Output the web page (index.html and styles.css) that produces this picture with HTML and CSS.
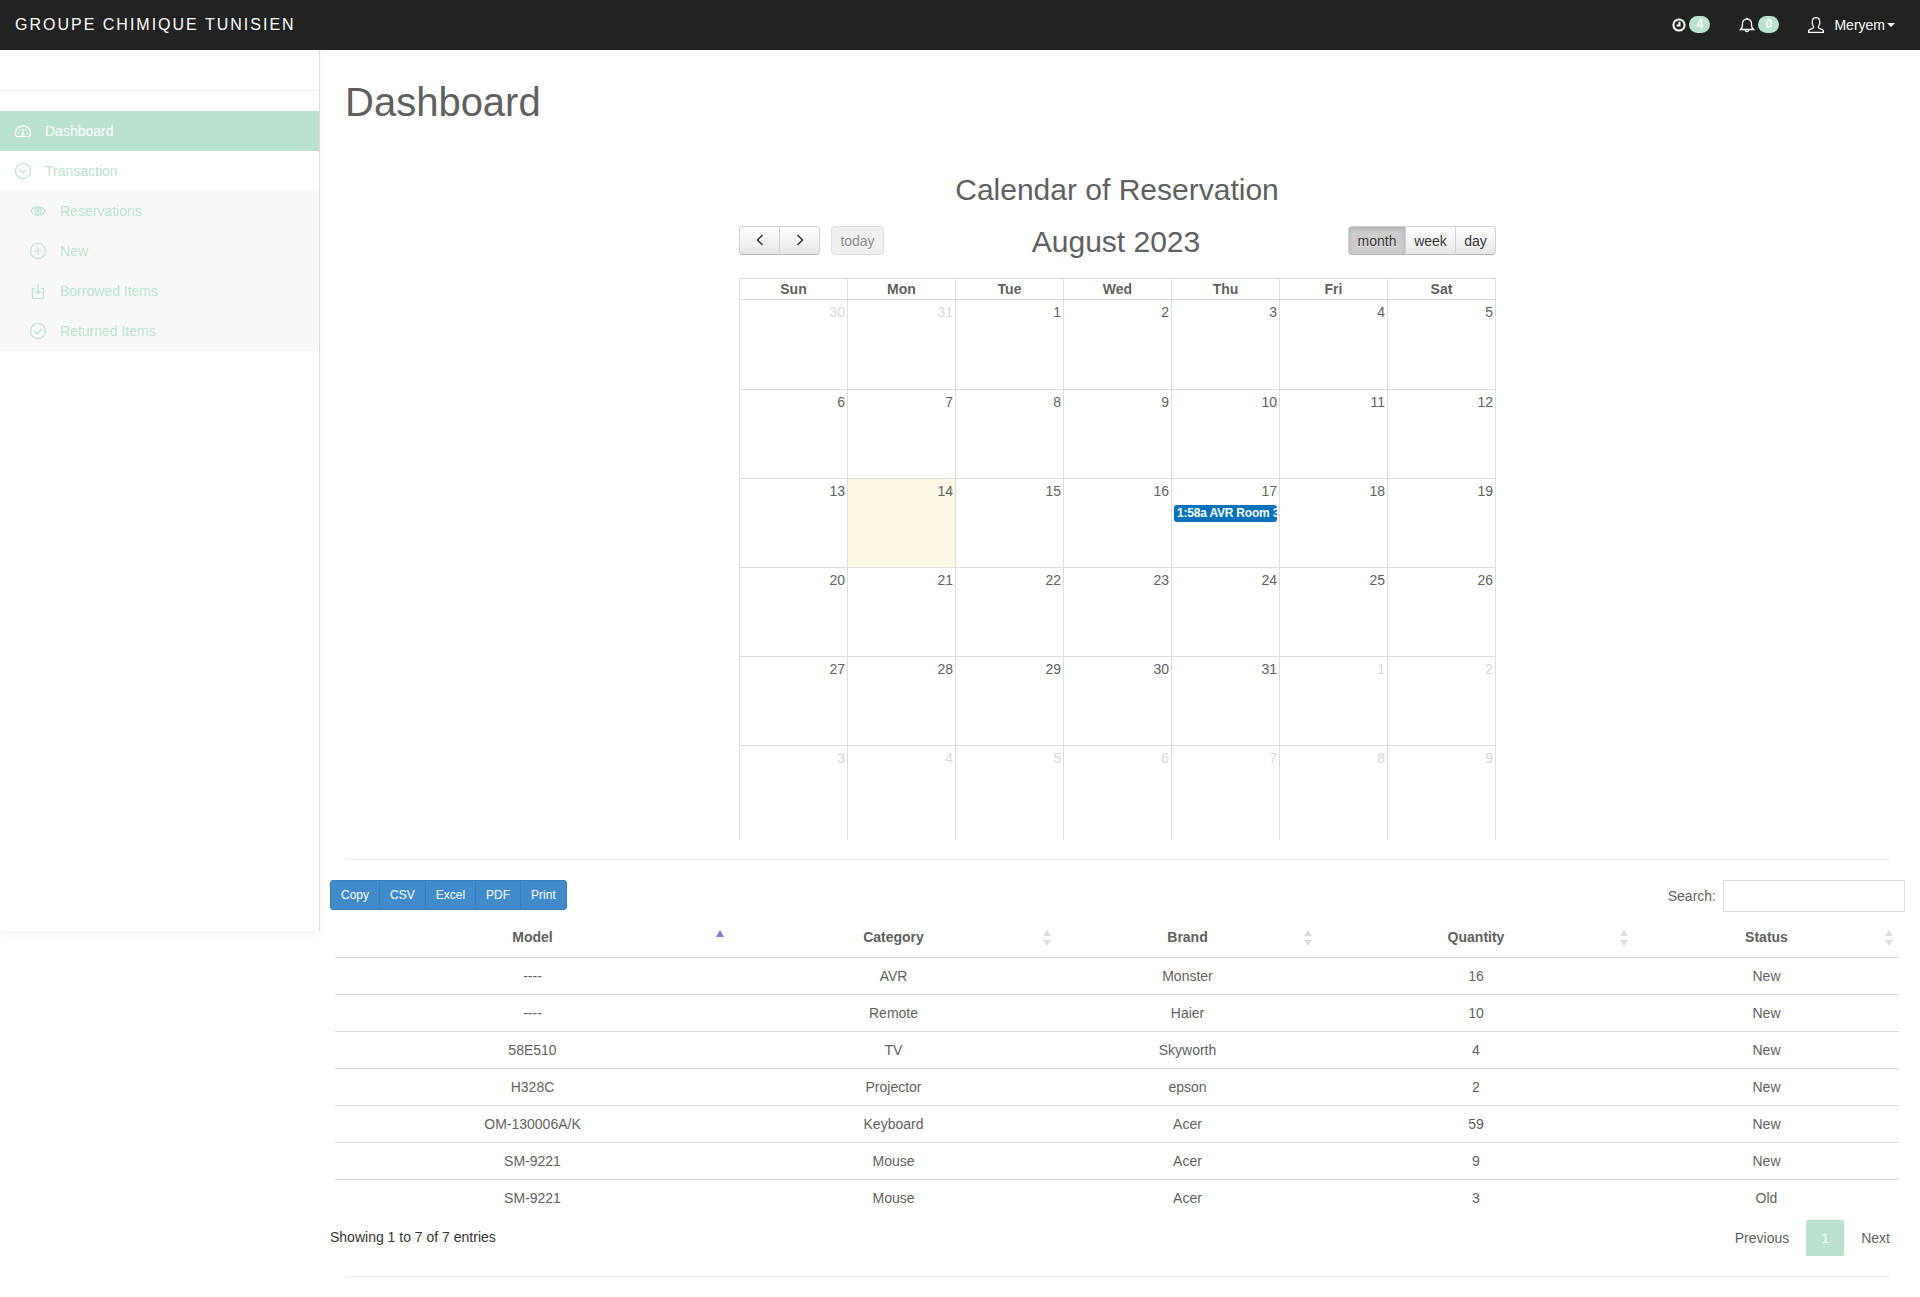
FILE: index.html
```html
<!DOCTYPE html>
<html lang="en">
<head>
  <meta charset="UTF-8">
  <meta name="viewport" content="width=device-width, initial-scale=1.0">
  <title>Dashboard</title>
  <link rel="stylesheet" href="styles.css">
</head>
<body>
  <nav class="navbar">
    <a class="brand">GROUPE CHIMIQUE TUNISIEN</a>
    <ul class="nav-right">
      <li class="nav-alert nav-clock">
        <svg class="nav-icon" viewBox="0 0 16 16"><circle cx="8" cy="8" r="5.6"/><path d="M8.5 4.8v3.6H5.6"/></svg>
        <span class="badge">4</span>
      </li>
      <li class="nav-alert nav-bell">
        <svg class="nav-icon thin" viewBox="0 0 16 16"><path d="M1.5 12.5c1.4-1.3 2-2.4 2-4.5V6.5a4.5 4.5 0 0 1 9 0V8c0 2.1.6 3.2 2 4.5zM6.3 13c0 2.2 3.4 2.2 3.4 0M8 .8V2"/></svg>
        <span class="badge">0</span>
      </li>
      <li class="nav-user">
        <svg class="nav-icon thin user-icon" viewBox="0 0 16 16"><path d="M.6 15.4v-1.6c0-1.5 4.4-2 5-3.1.3-.6-.1-1.300-.5-2-.6-1-.9-2-.9-3.300C4.200 2.400 5.800.6 8 .6s3.800 1.800 3.800 4.800c0 1.300-.3 2.300-.9 3.300-.4.7-.8 1.400-.5 2 .6 1.100 5 1.600 5 3.100v1.600z"/></svg>
        <span>Meryem</span><i class="caret"></i>
      </li>
    </ul>
  </nav>

  <div class="wrapper">
    <aside class="sidebar">
      <div class="sidebar-search"></div>
      <ul class="side-menu">
        <li class="side-item active">
          <svg class="side-icon" viewBox="0 0 16 16"><path d="M1.400 13.500C.8 12.500.5 11.500.5 10.300a7.500 7.500 0 0 1 15 0c0 1.200-.3 2.200-.9 3.200zM8 6v5M3 10.500h1.300M11.700 10.500H13M4.500 6.500l1 1M11.500 6.500l-1 1"/><circle cx="8" cy="11.700" r="1"/></svg>
          Dashboard
        </li>
        <li class="side-item">
          <svg class="side-icon" viewBox="0 0 16 16"><circle cx="8" cy="8" r="7.500"/><path d="M4.500 6.800 8 10l3.500-3.200"/></svg>
          Transaction
        </li>
      </ul>
      <ul class="side-sub">
        <li class="side-item">
          <svg class="side-icon" viewBox="0 0 16 16"><path d="M.5 8C2.500 5.200 5 3.800 8 3.800s5.500 1.400 7.500 4.200c-2 2.800-4.500 4.200-7.500 4.200S2.500 10.800.5 8z"/><circle cx="8" cy="8" r="3.200"/><circle cx="8" cy="8" r="1.200"/></svg>
          Reservations
        </li>
        <li class="side-item">
          <svg class="side-icon" viewBox="0 0 16 16"><circle cx="8" cy="8" r="7.500"/><path d="M8 4v8M4 8h8"/></svg>
          New
        </li>
        <li class="side-item">
          <svg class="side-icon" viewBox="0 0 16 16"><path d="M5.500 5.500h-3v10h11v-10h-3M8 .5v10M5.500 8 8 10.500 10.500 8"/></svg>
          Borrowed Items
        </li>
        <li class="side-item">
          <svg class="side-icon" viewBox="0 0 16 16"><circle cx="8" cy="8" r="7.500"/><path d="M4.300 8.300 7 11l5-5.500"/></svg>
          Returned Items
        </li>
      </ul>
    </aside>

    <main class="page">
      <h1 class="page-title">Dashboard</h1>

      <h2 class="calendar-title">Calendar of Reservation</h2>
      <div class="calendar">
        <div class="fc-toolbar">
          <div class="fc-left">
            <div class="btn-group">
              <button class="fc-btn fc-arrow"><svg viewBox="0 0 10 12"><path d="M7.500 1 2.500 6l5 5"/></svg></button>
              <button class="fc-btn fc-arrow"><svg viewBox="0 0 10 12"><path d="M2.500 1l5 5-5 5"/></svg></button>
            </div>
            <button class="fc-btn fc-today">today</button>
          </div>
          <h2 class="fc-month">August 2023</h2>
          <div class="btn-group fc-views">
            <button class="fc-btn fc-active fc-w-month">month</button>
            <button class="fc-btn fc-w-week">week</button>
            <button class="fc-btn fc-w-day">day</button>
          </div>
        </div>

        <table class="fc-grid">
          <thead>
            <tr><th>Sun</th><th>Mon</th><th>Tue</th><th>Wed</th><th>Thu</th><th>Fri</th><th>Sat</th></tr>
          </thead>
          <tbody>
            <tr class="first-row">
              <td class="other">30</td><td class="other">31</td><td>1</td><td>2</td><td>3</td><td>4</td><td>5</td>
            </tr>
            <tr>
              <td>6</td><td>7</td><td>8</td><td>9</td><td>10</td><td>11</td><td>12</td>
            </tr>
            <tr>
              <td>13</td><td class="today">14</td><td>15</td><td>16</td>
              <td>17<div class="fc-event">1:58a AVR Room 3</div></td>
              <td>18</td><td>19</td>
            </tr>
            <tr>
              <td>20</td><td>21</td><td>22</td><td>23</td><td>24</td><td>25</td><td>26</td>
            </tr>
            <tr>
              <td>27</td><td>28</td><td>29</td><td>30</td><td>31</td><td class="other">1</td><td class="other">2</td>
            </tr>
            <tr class="last-row">
              <td class="other">3</td><td class="other">4</td><td class="other">5</td><td class="other">6</td><td class="other">7</td><td class="other">8</td><td class="other">9</td>
            </tr>
          </tbody>
        </table>
      </div>

      <hr class="rule rule-top">

      <div class="dt-top">
        <div class="dt-buttons">
          <button>Copy</button><button>CSV</button><button>Excel</button><button>PDF</button><button>Print</button>
        </div>
        <label class="dt-search">Search:<input type="search"></label>
      </div>

      <table class="data-table">
        <thead>
          <tr>
            <th class="col-model sort-asc">Model</th>
            <th class="col-category sort">Category</th>
            <th class="col-brand sort">Brand</th>
            <th class="col-quantity sort">Quantity</th>
            <th class="col-status sort">Status</th>
          </tr>
        </thead>
        <tbody>
          <tr><td>----</td><td>AVR</td><td>Monster</td><td>16</td><td>New</td></tr>
          <tr><td>----</td><td>Remote</td><td>Haier</td><td>10</td><td>New</td></tr>
          <tr><td>58E510</td><td>TV</td><td>Skyworth</td><td>4</td><td>New</td></tr>
          <tr><td>H328C</td><td>Projector</td><td>epson</td><td>2</td><td>New</td></tr>
          <tr><td>OM-130006A/K</td><td>Keyboard</td><td>Acer</td><td>59</td><td>New</td></tr>
          <tr><td>SM-9221</td><td>Mouse</td><td>Acer</td><td>9</td><td>New</td></tr>
          <tr><td>SM-9221</td><td>Mouse</td><td>Acer</td><td>3</td><td>Old</td></tr>
        </tbody>
      </table>

      <div class="dt-bottom">
        <div class="dt-info">Showing 1 to 7 of 7 entries</div>
        <ul class="pagination">
          <li>Previous</li>
          <li class="current">1</li>
          <li>Next</li>
        </ul>
      </div>

      <hr class="rule rule-bottom">
    </main>
  </div>
</body>
</html>
```

FILE: styles.css
```css
* {
  box-sizing: border-box;
}
html, body {
  margin: 0;
  padding: 0;
}
body {
  font-family: "Liberation Sans", Arial, sans-serif;
  font-size: 14px;
  line-height: 20px;
  color: #5f5f5f;
  background-color: #fff;
}
ul {
  list-style: none;
  margin: 0;
  padding: 0;
}

/* top bar */
.navbar {
  display: flex;
  justify-content: space-between;
  align-items: center;
  height: 50px;
  background-color: #222;
  color: #fff;
}
.brand {
  margin-left: 15px;
  font-size: 16px;
  letter-spacing: 2px;
}
.nav-right {
  display: flex;
  align-items: center;
}
.nav-alert, .nav-user {
  display: flex;
  align-items: center;
}
.nav-icon {
  width: 16px;
  height: 16px;
  fill: none;
  stroke: #fff;
  stroke-width: 2;
}
.nav-icon.thin {
  stroke-width: 1.300;
}
.badge {
  width: 21px;
  height: 17px;
  margin-bottom: 1px;
  margin-left: 2px;
  border-radius: 9px;
  background-color: #b9e3ce;
  color: #fff;
  font-size: 12px;
  font-weight: bold;
  line-height: 17px;
  text-align: center;
}
.nav-bell {
  margin-left: 29px;
}
.nav-bell .badge {
  margin-left: 3px;
}
.nav-user {
  margin-left: 29px;
  margin-right: 25px;
  margin-top: -1px;
}
.user-icon {
  margin-right: 10px;
}
.caret {
  width: 0;
  height: 0;
  margin-left: 2px;
  border-top: 4px solid #fff;
  border-left: 4px solid transparent;
  border-right: 4px solid transparent;
}

/* layout */
.wrapper {
  display: flex;
  align-items: flex-start;
}
.sidebar {
  flex: 0 0 320px;
  height: 881px;
  border-right: 1px solid #ddd;
  background-color: #fff;
  box-shadow: 0 2px 8px rgba(0, 0, 0, 0.06);
}
.sidebar-search {
  height: 41px;
  border-bottom: 1px solid #eee;
}
.side-menu {
  margin-top: 20px;
}
.side-item {
  display: flex;
  align-items: center;
  height: 40px;
  padding-left: 15px;
  color: #b9e3ce;
}
.side-item.active {
  background-color: #b9e3ce;
  color: #fff;
}
.side-icon {
  width: 16px;
  height: 16px;
  margin-right: 14px;
  fill: none;
  stroke: currentColor;
  stroke-width: 1.200;
}
.side-sub {
  background-color: #f8f8f8;
}
.side-sub .side-item {
  padding-left: 30px;
}

.page {
  flex: 1;
  min-width: 0;
  padding: 30px 18px 0 10px;
}
.page-title {
  margin: 0 0 0 15px;
  font-size: 40px;
  font-weight: normal;
  line-height: 44px;
}

/* calendar */
.calendar-title {
  margin: 49px 0 20px;
  padding-left: 2px;
  font-size: 30px;
  font-weight: normal;
  line-height: 33px;
  text-align: center;
}
.calendar {
  width: 757px;
  margin-left: 409px;
}
.fc-toolbar {
  display: flex;
  justify-content: space-between;
  align-items: center;
  height: 29px;
  margin-bottom: 23px;
}
.fc-left {
  display: flex;
  width: 145px;
}
.fc-month {
  margin: 3px 0 0;
  font-size: 30px;
  font-weight: normal;
  line-height: 30px;
}
.btn-group {
  display: flex;
}
.fc-btn {
  height: 29px;
  padding: 0;
  border: 1px solid #d0d0d0;
  border-bottom-color: #b8b8b8;
  border-radius: 0;
  background-image: linear-gradient(#fff, #e6e6e6);
  color: #333;
  font-family: inherit;
  font-size: 14px;
  text-shadow: 0 1px 1px rgba(255, 255, 255, 0.75);
}
.fc-btn + .fc-btn {
  margin-left: -1px;
}
.fc-arrow {
  width: 41px;
}
.fc-arrow svg {
  width: 10px;
  height: 12px;
  fill: none;
  stroke: #333;
  stroke-width: 1.500;
}
.btn-group .fc-btn:first-child {
  border-radius: 4px 0 0 4px;
}
.btn-group .fc-btn:last-child {
  border-radius: 0 4px 4px 0;
}
.fc-today {
  width: 53px;
  margin-left: 11px;
  border-color: #ddd;
  border-radius: 4px;
  background-image: none;
  background-color: #efefef;
  color: #888;
}
.fc-views {
  width: 148px;
}
.fc-w-month {
  width: 58px;
}
.fc-w-week {
  width: 51px;
}
.fc-w-day {
  width: 41px;
}
.fc-active {
  background-image: none;
  background-color: #ccc;
  box-shadow: inset 0 2px 4px rgba(0, 0, 0, 0.15);
}
.fc-grid {
  width: 757px;
  table-layout: fixed;
  border-collapse: collapse;
}
.fc-grid th, .fc-grid td {
  border: 1px solid #ddd;
}
.fc-grid th {
  height: 21px;
  padding: 0;
  font-size: 14px;
  line-height: 20px;
}
.fc-grid td {
  height: 89px;
  padding: 2px 2px 0;
  vertical-align: top;
  text-align: right;
}
.fc-grid .first-row td {
  height: 90px;
}
.fc-grid .other {
  color: #d6d6d6;
}
.fc-grid .today {
  background-color: #fcf8e3;
}
.fc-grid .last-row td {
  height: 94px;
  border-bottom: none;
}
.fc-event {
  overflow: hidden;
  height: 17px;
  margin: 4px 0 0;
  padding: 0 0 0 3px;
  border-radius: 3px;
  background-color: #0071bb;
  color: #fff;
  font-size: 12px;
  font-weight: bold;
  letter-spacing: -0.2px;
  line-height: 16px;
  text-align: left;
  white-space: nowrap;
}

/* rules */
.rule {
  margin: 0;
  border: none;
  border-top: 1px solid #eee;
}
.rule-top {
  margin: 19px 12px 20px 15px;
}
.rule-bottom {
  margin: 20px 12px 0 15px;
}

/* table tools */
.dt-top {
  display: flex;
  justify-content: space-between;
  align-items: flex-start;
  margin-right: -3px;
}
.dt-buttons {
  display: flex;
}
.dt-buttons button {
  height: 30px;
  margin-left: -1px;
  padding: 0 10px;
  border: 1px solid #357ebd;
  background-color: #428bca;
  color: #fff;
  font-family: inherit;
  font-size: 12px;
}
.dt-buttons button:first-child {
  margin-left: 0;
  border-radius: 3px 0 0 3px;
}
.dt-buttons button:last-child {
  border-radius: 0 3px 3px 0;
}
.dt-search {
  display: flex;
  align-items: center;
  height: 32px;
}
.dt-search input {
  width: 182px;
  height: 32px;
  margin-left: 7px;
  border: 1px solid #ddd;
}

/* data table */
.data-table {
  width: 1564px;
  margin: 7px 0 0 5px;
  table-layout: fixed;
  border-collapse: separate;
  border-spacing: 0;
}
.data-table th {
  position: relative;
  padding: 8px 0 10px;
  border-bottom: 1px solid #ddd;
  font-size: 14px;
  text-align: center;
}
.data-table td {
  height: 37px;
  padding: 8px 0;
  text-align: center;
  border-bottom: 1px solid #ddd;
}
.data-table tr:last-child td {
  border-bottom: none;
}
.col-model {
  width: 395px;
}
.col-category {
  width: 327px;
}
.col-brand {
  width: 261px;
}
.col-quantity {
  width: 316px;
}
.col-status {
  width: 265px;
}
.sort::before, .sort::after, .sort-asc::before {
  content: "";
  position: absolute;
  right: 6px;
  border-left: 4px solid transparent;
  border-right: 4px solid transparent;
}
.sort::before {
  top: 11px;
  border-bottom: 6px solid #ddd;
}
.sort::after {
  top: 21px;
  border-top: 6px solid #ddd;
}
.sort-asc::before {
  top: 11px;
  border-bottom: 7px solid #7b7fdf;
}

.dt-bottom {
  display: flex;
  justify-content: space-between;
  align-items: flex-start;
  margin-top: 3px;
}
.dt-info {
  padding-top: 7px;
  color: #333;
}
.pagination {
  display: flex;
  align-items: center;
}
.pagination li {
  height: 36px;
  padding: 0 12px;
  margin-left: 5px;
  border-radius: 2px;
  line-height: 36px;
}
.pagination .current {
  width: 38px;
  padding: 0;
  background-color: #b9e3ce;
  color: #fff;
  text-align: center;
}
```
